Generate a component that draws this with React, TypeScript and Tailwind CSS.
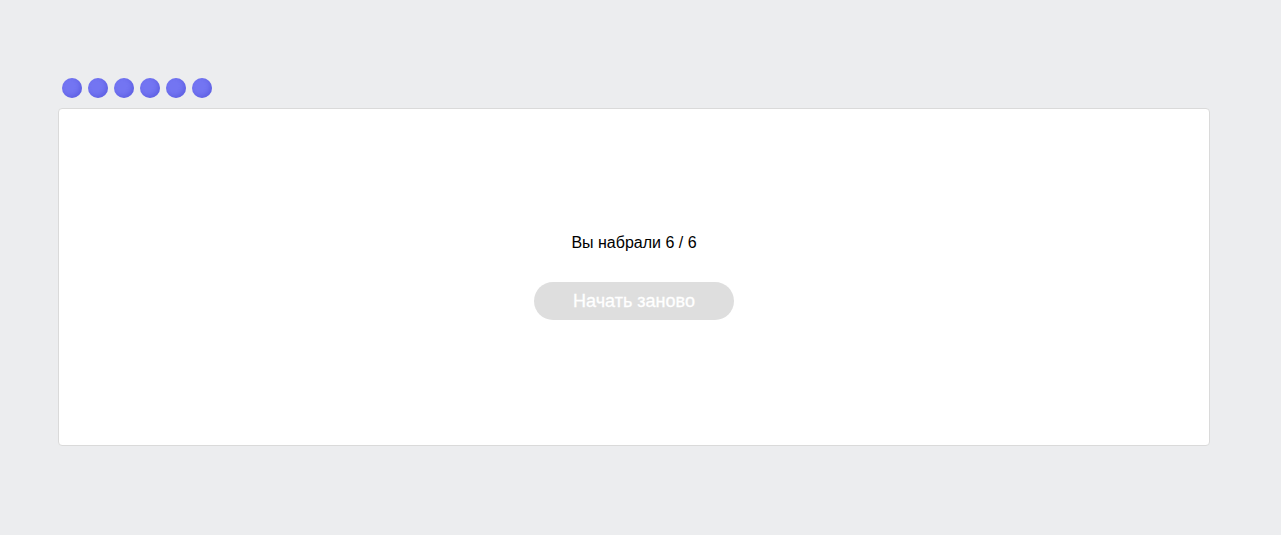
export default function App() {
  const dots = [0, 1, 2, 3, 4, 5];
  return (
    <div className="min-h-[535px] w-full bg-[#ecedef] px-[58px] pt-[78px] font-['Liberation_Sans',Arial,sans-serif]">
      <div className="w-[1152px]">
        <div className="flex gap-[6px] pl-[4px]">
          {dots.map((d) => (
            <span
              key={d}
              className="block h-[20px] w-[20px] rounded-full bg-[#7375f2] shadow-[inset_-2px_-2px_4px_rgba(60,60,200,0.35)]"
            />
          ))}
        </div>
        <div className="mt-[10px] flex h-[338px] flex-col items-center justify-center rounded-[4px] border border-[#dadada] bg-white">
          <p className="text-[16px] leading-[18px] text-black">Вы набрали 6 / 6</p>
          <button className="mt-[30px] h-[38px] w-[200px] rounded-full bg-[#dedede] text-[18px] text-white [-webkit-text-stroke:0.3px_white]">
            Начать заново
          </button>
        </div>
      </div>
    </div>
  );
}
